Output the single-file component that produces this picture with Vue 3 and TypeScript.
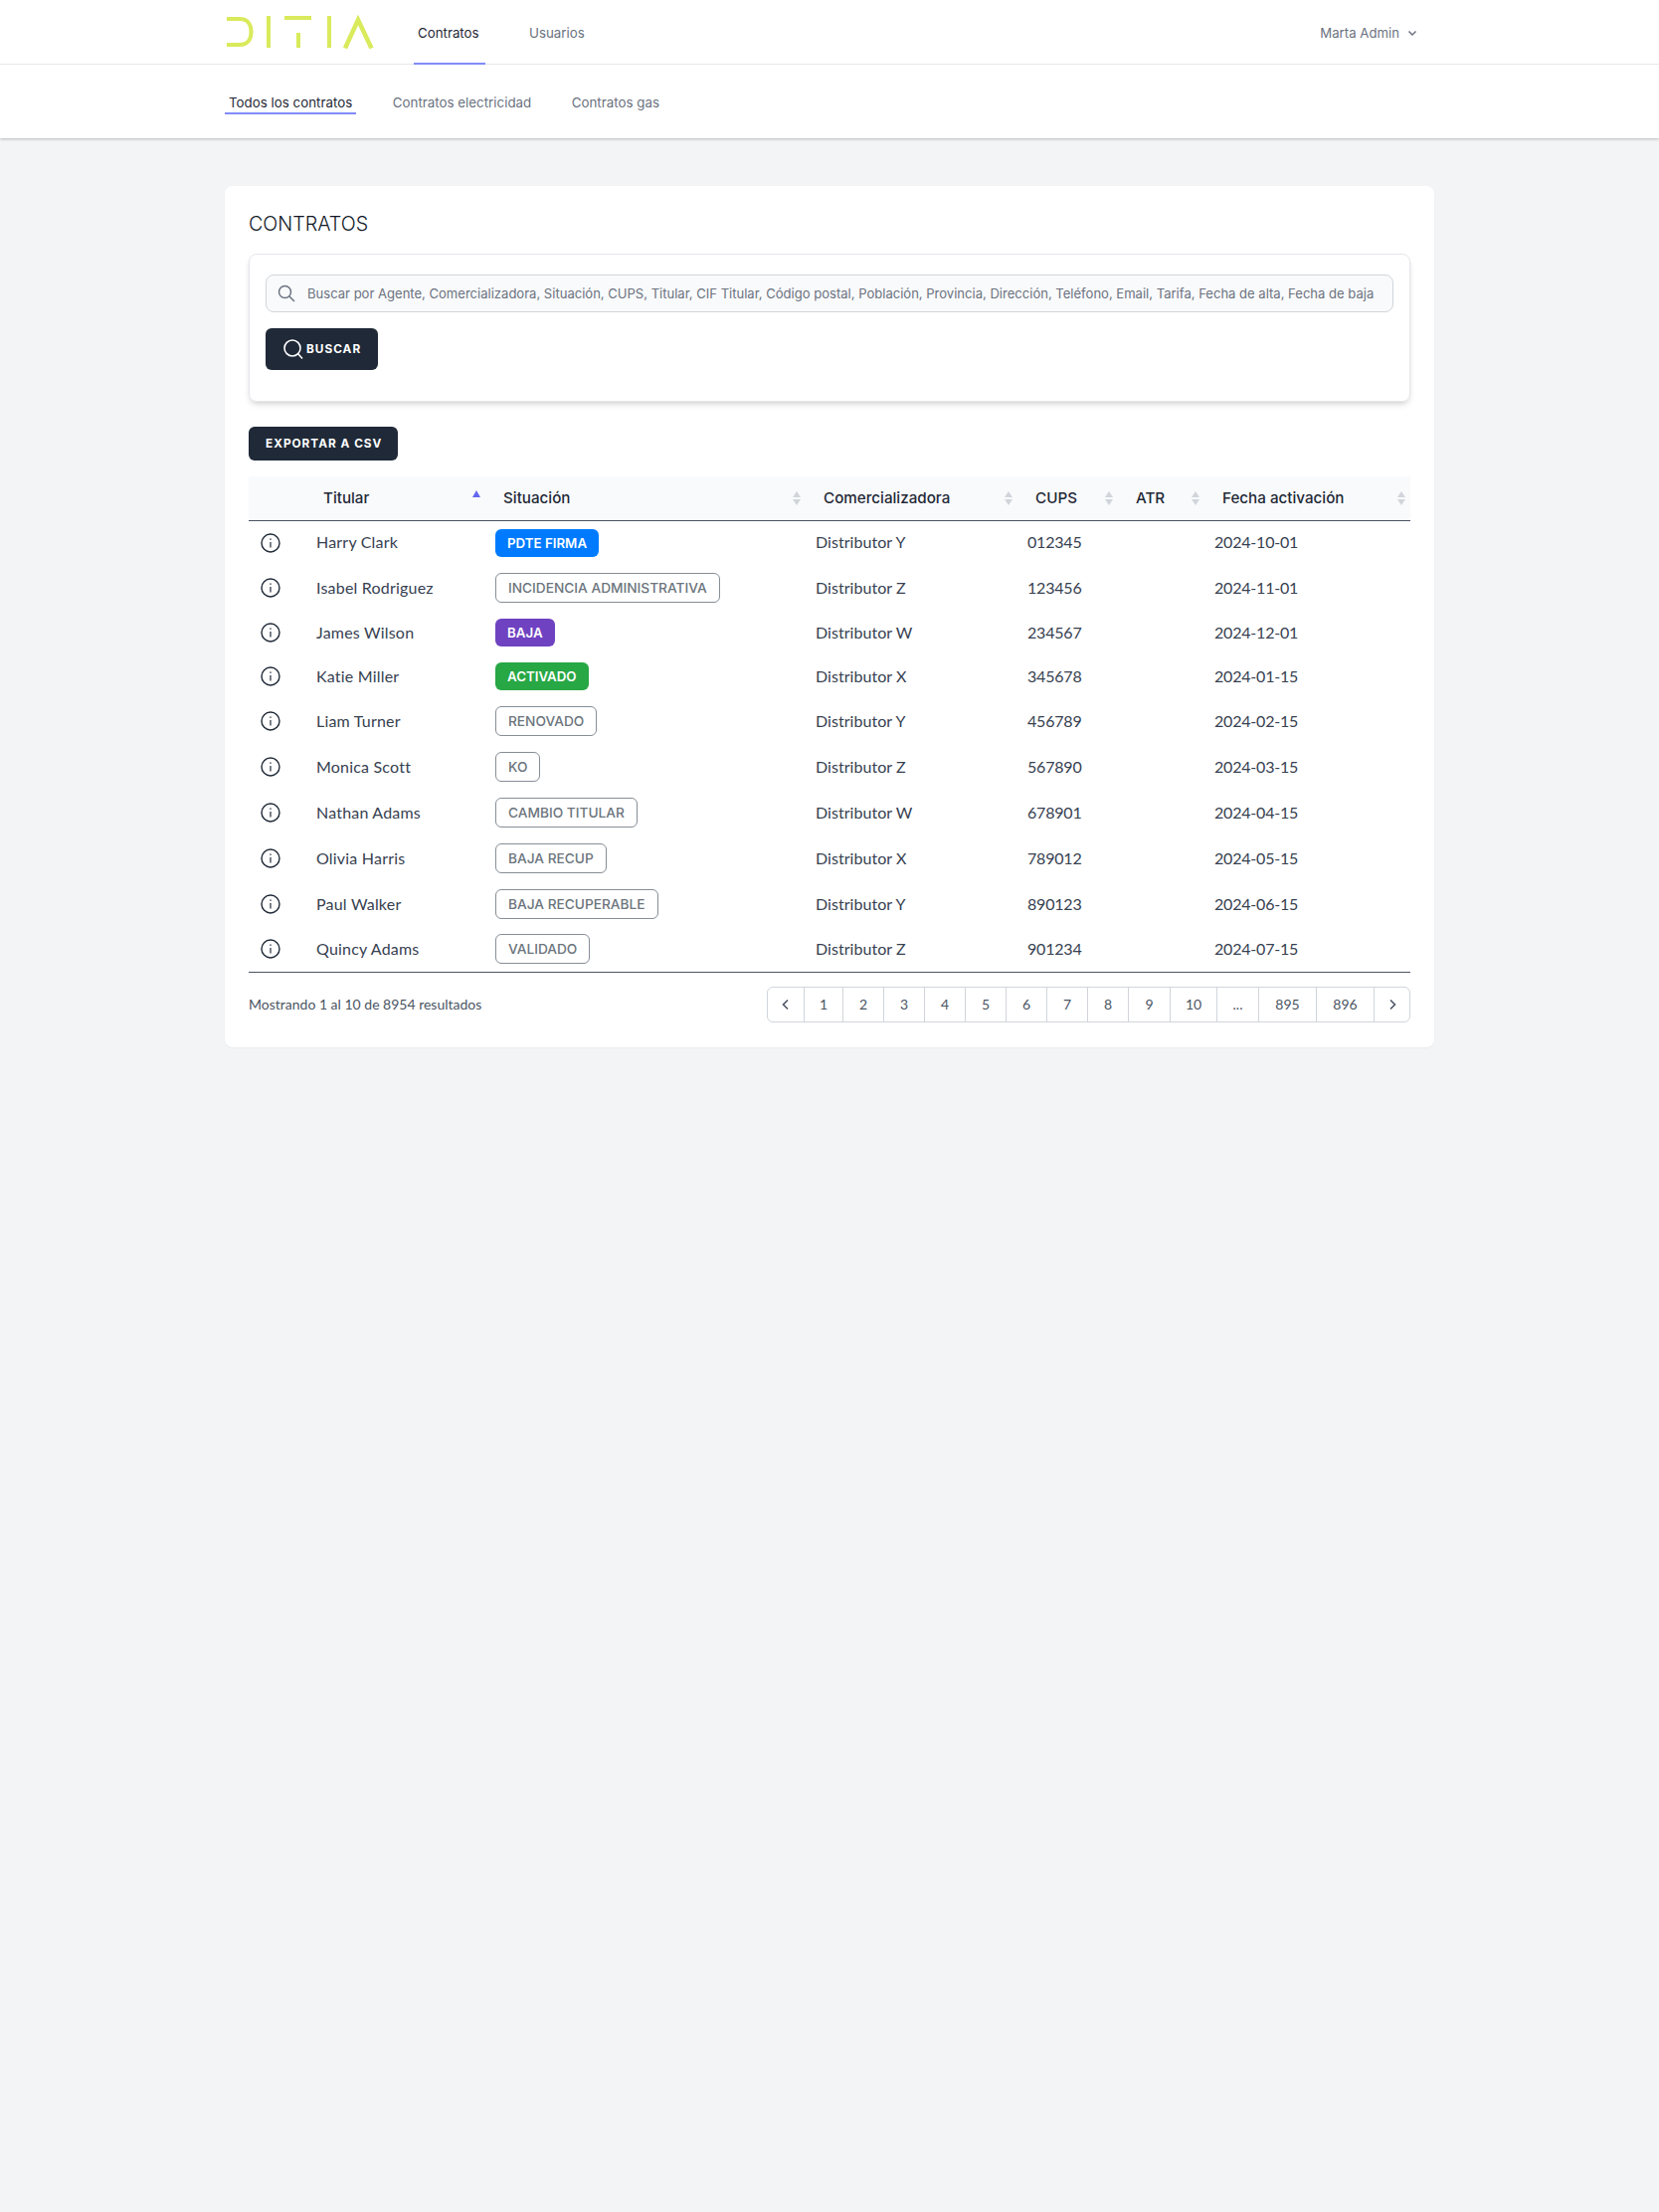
<script setup lang="ts">
interface Row { name: string; status: string; kind: string; dist: string; cups: string; date: string }
const rows: Row[] = [
  { name: 'Harry Clark', status: 'PDTE FIRMA', kind: 'blue', dist: 'Distributor Y', cups: '012345', date: '2024-10-01' },
  { name: 'Isabel Rodriguez', status: 'INCIDENCIA ADMINISTRATIVA', kind: 'line', dist: 'Distributor Z', cups: '123456', date: '2024-11-01' },
  { name: 'James Wilson', status: 'BAJA', kind: 'purple', dist: 'Distributor W', cups: '234567', date: '2024-12-01' },
  { name: 'Katie Miller', status: 'ACTIVADO', kind: 'green', dist: 'Distributor X', cups: '345678', date: '2024-01-15' },
  { name: 'Liam Turner', status: 'RENOVADO', kind: 'line', dist: 'Distributor Y', cups: '456789', date: '2024-02-15' },
  { name: 'Monica Scott', status: 'KO', kind: 'line', dist: 'Distributor Z', cups: '567890', date: '2024-03-15' },
  { name: 'Nathan Adams', status: 'CAMBIO TITULAR', kind: 'line', dist: 'Distributor W', cups: '678901', date: '2024-04-15' },
  { name: 'Olivia Harris', status: 'BAJA RECUP', kind: 'line', dist: 'Distributor X', cups: '789012', date: '2024-05-15' },
  { name: 'Paul Walker', status: 'BAJA RECUPERABLE', kind: 'line', dist: 'Distributor Y', cups: '890123', date: '2024-06-15' },
  { name: 'Quincy Adams', status: 'VALIDADO', kind: 'line', dist: 'Distributor Z', cups: '901234', date: '2024-07-15' },
]
const heads = [
  { label: 'Situación', key: 's' },
  { label: 'Comercializadora', key: 'c' },
  { label: 'CUPS', key: 'u' },
  { label: 'ATR', key: 'a' },
  { label: 'Fecha activación', key: 'f' },
]
const pages = [
  { t: '1', w: 39 }, { t: '2', w: 41 }, { t: '3', w: 41 }, { t: '4', w: 41 }, { t: '5', w: 41 }, { t: '6', w: 41 },
  { t: '7', w: 41 }, { t: '8', w: 41 }, { t: '9', w: 42 }, { t: '10', w: 47 }, { t: '...', w: 42 }, { t: '895', w: 58 }, { t: '896', w: 58 },
]
</script>

<template>
  <div class="page">
    <header class="top">
      <div class="wrap navbar">
        <svg class="logo" width="152" height="34" viewBox="0 0 152 34" fill="none" stroke="#d9ea5b" stroke-width="4">
          <path d="M2 4H15C22.500 4 26.500 9 26.500 17C26.500 25 22.500 30 15 30H2" />
          <path d="M44 1V33M60 3H87M74 18V33M105 1V33" />
          <path d="M121 33.500L134 5L147.500 33.500" stroke-width="4.500" />
        </svg>
        <nav class="tabs">
          <a class="tab active">Contratos</a>
          <a class="tab">Usuarios</a>
        </nav>
        <div class="user">
          <span>Marta Admin</span>
          <svg width="12" height="12" viewBox="0 0 12 12" fill="none" stroke="#6b7280" stroke-width="1.500"><path d="M2.500 4.500L6 8L9.500 4.500" /></svg>
        </div>
      </div>
      <div class="wrap subnav">
        <a class="sub current">Todos los contratos</a>
        <a class="sub">Contratos electricidad</a>
        <a class="sub">Contratos gas</a>
      </div>
    </header>

    <main class="wrap content">
      <section class="card">
        <h1>CONTRATOS</h1>
        <div class="panel">
          <div class="search">
            <svg width="18" height="18" viewBox="0 0 18 18" fill="none" stroke="#6b7280" stroke-width="1.500"><circle cx="7.500" cy="7.500" r="6" /><path d="M12 12L17 17" /></svg>
            <span>Buscar por Agente, Comercializadora, Situación, CUPS, Titular, CIF Titular, Código postal, Población, Provincia, Dirección, Teléfono, Email, Tarifa, Fecha de alta, Fecha de baja</span>
          </div>
          <button class="btn buscar">
            <svg width="22" height="22" viewBox="0 0 22 22" fill="none" stroke="#fff" stroke-width="1.600"><circle cx="10" cy="10" r="8" /><path d="M15.500 15.500L20 20.500" /></svg>
            BUSCAR
          </button>
        </div>
        <button class="btn export">EXPORTAR A CSV</button>

        <table>
          <colgroup>
            <col class="c1" /><col class="c2" /><col class="c3" /><col class="c4" /><col class="c5" /><col class="c6" /><col class="c7" />
          </colgroup>
          <thead>
            <tr>
              <th></th>
              <th class="tit">Titular<i class="asc"></i></th>
              <th v-for="h in heads" :key="h.key">
                {{ h.label }}
                <span class="sort"><i class="up"></i><i class="down"></i></span>
              </th>
            </tr>
          </thead>
          <tbody>
            <tr v-for="r in rows" :key="r.name" :class="r.kind === 'line' ? 'tall' : 'short'">
              <td class="ic">
                <svg width="20" height="20" viewBox="0 0 20 20" fill="none" stroke="#1f2937" stroke-width="1.400"><circle cx="10" cy="10" r="9" /><path d="M10 9V14.500" stroke-width="1.200" /><path d="M10 5.600V6.800" stroke-width="1.400" /></svg>
              </td>
              <td class="tx">{{ r.name }}</td>
              <td><span class="badge" :class="r.kind">{{ r.status }}</span></td>
              <td class="tx dist">{{ r.dist }}</td>
              <td class="tx num">{{ r.cups }}</td>
              <td></td>
              <td class="tx num">{{ r.date }}</td>
            </tr>
          </tbody>
        </table>

        <div class="foot">
          <span class="count">Mostrando 1 al 10 de 8954 resultados</span>
          <div class="pager">
            <span class="pg arrow"><svg width="14" height="14" viewBox="0 0 14 14" fill="none" stroke="#4b5563" stroke-width="1.600"><path d="M9 2.500L4.500 7L9 11.500" /></svg></span>
            <span v-for="p in pages" :key="p.t" class="pg" :style="{ width: p.w + 'px' }">{{ p.t }}</span>
            <span class="pg arrow"><svg width="14" height="14" viewBox="0 0 14 14" fill="none" stroke="#4b5563" stroke-width="1.600"><path d="M5 2.500L9.500 7L5 11.500" /></svg></span>
          </div>
        </div>
      </section>
    </main>
  </div>
</template>

<style scoped>
.page { min-height: 2224px; background: #f3f4f6; font-family: Lato, "Inter", sans-serif; color: #1f2937; }
.wrap { width: 1216px; margin: 0 auto; box-sizing: border-box; }
.top { position: relative; background: #fff; height: 139px; box-shadow: 0 1px 3px rgba(0,0,0,.18), 0 1px 2px rgba(0,0,0,.08); }
.top::after { content: ""; position: absolute; left: 0; right: 0; top: 64px; height: 1px; background: #e5e7eb; }
.navbar { height: 65px; display: flex; align-items: flex-start; }
.logo { margin-top: 15px; flex: none; }
.tabs { display: flex; margin-left: 38px; }
.tab { position: relative; z-index: 1; height: 65px; box-sizing: border-box; padding: 0 4px; line-height: 66px; font-size: 13.300px; color: #6b7280; margin-right: 40px; font-family: Inter, sans-serif; }
.tab.active { width: 72px; color: #1f2937; border-bottom: 2px solid #818cf8; }
.user { margin-left: auto; margin-right: 16px; margin-top: 24px; display: flex; align-items: center; gap: 7px; font-size: 13.200px; color: #6b7280; font-family: Inter, sans-serif; line-height: 18px; }
.subnav { height: 74px; display: flex; align-items: flex-start; padding-top: 28px; font-family: Inter, sans-serif; }
.sub { font-size: 13.350px; color: #6b7280; height: 22px; line-height: 20px; padding: 0 4px; margin-right: 32.500px; box-sizing: border-box; }
.sub.current { color: #1f2937; border-bottom: 2px solid #818cf8; }
.content { padding-top: 48px; }
.card { background: #fff; border-radius: 8px; padding: 24px; height: 866px; box-sizing: border-box; box-shadow: 0 1px 2px rgba(0,0,0,.04); }
h1 { margin: 0; font-size: 19.700px; font-weight: 300; line-height: 28px; height: 44px; color: #111827; font-family: Inter, sans-serif; }
.panel { height: 149px; box-sizing: border-box; border: 1px solid #e5e7eb; border-radius: 8px; padding: 20px 16px; box-shadow: 0 4px 6px -1px rgba(0,0,0,.12), 0 2px 4px -2px rgba(0,0,0,.1); }
.search { height: 38px; box-sizing: border-box; background: #f9fafb; border: 1px solid #d1d5db; border-radius: 8px; display: flex; align-items: center; padding-left: 11px; gap: 12px; font-size: 13.050px; color: #6b7280; font-family: Inter, sans-serif; white-space: nowrap; overflow: hidden; }
.search svg { flex: none; }
.btn { display: flex; align-items: center; border: 0; background: #1f2937; color: #fff; font-family: Inter, sans-serif; font-weight: 700; font-size: 11.800px; letter-spacing: 1px; border-radius: 6px; }
.buscar { margin-top: 16px; width: 113px; height: 42px; padding: 0 0 0 17px; gap: 2px; }
.export { margin-top: 25px; width: 150px; height: 34px; padding: 0 0 0 17px; }
table { margin-top: 16px; width: 1168px; border-collapse: collapse; table-layout: fixed; font-size: 16px; }
.c1 { width: 58px; } .c2 { width: 180px; } .c3 { width: 322px; } .c4 { width: 213px; } .c5 { width: 101px; } .c6 { width: 87px; } .c7 { width: 207px; }
thead tr { height: 44px; background: #f9fafb; border-bottom: 1px solid #4b5563; }
th { position: relative; text-align: left; padding: 0 0 0 18px; font-weight: 500; font-size: 15.200px; color: #1f2937; font-family: Inter, sans-serif; }
th.tit { padding-left: 17px; }
td { padding: 0 0 0 10px; color: #374151; letter-spacing: .2px; }
td.tx { padding-bottom: 2px; }
td.dist { letter-spacing: .05px; }
td.num { letter-spacing: -.2px; }
td.ic { padding: 0 0 0 12px; line-height: 0; }
td.ic svg { display: block; }
tr.short { height: 44px; }
tr.tall { height: 46px; }
tbody tr:first-child { height: 45px; }
tbody tr:last-child { height: 45px; border-bottom: 1px solid #4b5563; }
.asc { position: absolute; right: 5px; top: 14px; width: 0; height: 0; border-left: 4px solid transparent; border-right: 4px solid transparent; border-bottom: 7px solid #6366f1; }
.sort { position: absolute; right: 5px; top: 15px; display: flex; flex-direction: column; gap: 2px; }
.up, .down { display: block; width: 0; height: 0; border-left: 4px solid transparent; border-right: 4px solid transparent; }
.up { border-bottom: 6px solid #d1d5db; }
.down { border-top: 6px solid #d1d5db; }
.badge { display: inline-block; box-sizing: border-box; border-radius: 6px; padding: 0 12px; font-size: 13.300px; line-height: 28px; height: 28px; font-weight: 600; color: #fff; vertical-align: middle; font-family: Inter, sans-serif; white-space: nowrap; letter-spacing: 0; }
.blue { background: #007bff; }
.purple { background: #6f42c1; }
.green { background: #28a745; }
.line { background: #fff; border: 1px solid #868e96; color: #6c757d; height: 30px; line-height: 28px; font-weight: 500; font-size: 13.700px; }
.foot { display: flex; justify-content: space-between; align-items: center; margin-top: 14px; }
.count { font-size: 14px; color: #4b5563; }
.pager { display: flex; height: 34px; border: 1px solid #d1d5db; border-radius: 6px; }
.pg { display: flex; align-items: center; justify-content: center; box-sizing: border-box; border-left: 1px solid #d1d5db; font-size: 14px; color: #4b5563; }
.pg.arrow { width: 36px; }
.pg.arrow:first-child { border-left: 0; }
</style>
